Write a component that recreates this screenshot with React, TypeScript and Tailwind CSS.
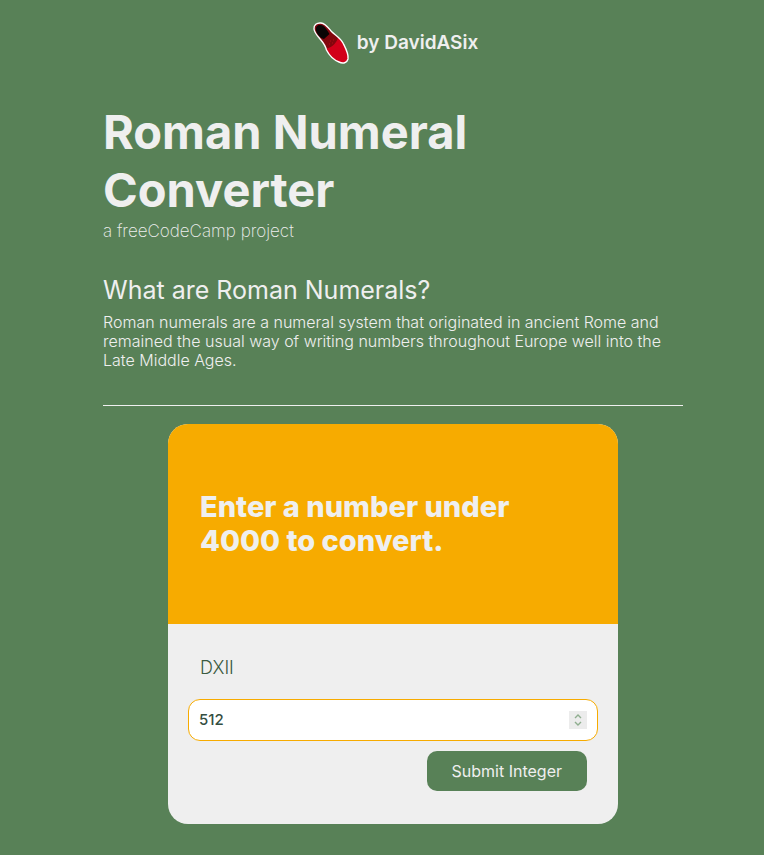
import { useState, type FormEvent } from "react";

const NUMERALS: [number, string][] = [
  [1000, "M"], [900, "CM"], [500, "D"], [400, "CD"], [100, "C"], [90, "XC"],
  [50, "L"], [40, "XL"], [10, "X"], [9, "IX"], [5, "V"], [4, "IV"], [1, "I"],
];

function toRoman(value: number): string {
  let rest = value;
  let result = "";
  for (const [size, symbol] of NUMERALS) {
    while (rest >= size) {
      result += symbol;
      rest -= size;
    }
  }
  return result;
}

function ShoeLogo() {
  return (
    <svg width="38" height="44" viewBox="0 0 38 44" aria-hidden="true">
      <path
        d="M2 8C1.500 4 5 1.500 9 2C13.500 2.500 16.500 7 19.500 10.500C23 14 28 16.500 31 22C33.500 27 37 33 36 38C35 42 31 43 27 41C22 39 17 34 14.500 29C13.500 25 11.500 22 8.500 18.500C5.500 15 2.500 12 2 8Z"
        fill="#d2001a"
      />
      <path
        d="M2 8C1.500 4 5 1.500 9 2C13.500 2.500 16.500 7 19.500 10.500C21.500 12.500 24 14.500 26 16.500C25 21 21 26 14 28C13 25 11.500 22 8.500 18.500C5.500 15 2.500 12 2 8Z"
        fill="#82060d"
      />
      <path d="M4 9C3.500 5.500 6 3.500 9 4C13 5 15 9 17.500 13L12 18C8 17 4.500 13 4 9Z" fill="#0a0505" />
      <path d="M18 20h1M21 19h1M20 22h1M17 23h1" stroke="#b00d16" strokeWidth="1" />
      <path
        d="M2 8C1.500 4 5 1.500 9 2C13.500 2.500 16.500 7 19.500 10.500C23 14 28 16.500 31 22C33.500 27 37 33 36 38C35 42 31 43 27 41C22 39 17 34 14.500 29C13.500 25 11.500 22 8.500 18.500C5.500 15 2.500 12 2 8Z"
        fill="none"
        stroke="#fff"
        strokeWidth="1.400"
      />
    </svg>
  );
}

function Chevron({ d }: { d: string }) {
  return (
    <svg width="8" height="5" viewBox="0 0 8 5" fill="none" stroke="#8fae8f" strokeWidth="1.400" aria-hidden="true">
      <path d={d} />
    </svg>
  );
}

export default function App() {
  const [value, setValue] = useState("512");
  const [roman, setRoman] = useState("DXII");

  const step = (by: number) =>
    setValue((v) => String(Math.min(3999, Math.max(1, Number(v) + by))));

  const submit = (event: FormEvent) => {
    event.preventDefault();
    const n = Number(value);
    if (n > 0 && n < 4000) setRoman(toRoman(n));
  };

  return (
    <div className="min-h-screen bg-[#588157] pr-[60px] pb-[31px] pl-[82px] font-['Inter','Liberation_Sans',sans-serif] text-[#efefef]">
      <div className="mx-auto max-w-[580px]">
        <header className="flex justify-center pt-[21px] pl-1">
          <a href="#" className="flex items-center gap-[7px] text-[19px] font-semibold">
            <ShoeLogo />
            by DavidASix
          </a>
        </header>

        <main>
          <h1 className="mt-[38px] text-[47px] leading-[58px] font-bold">Roman Numeral Converter</h1>
          <p className="text-[17px] leading-6 font-extralight">a freeCodeCamp project</p>

          <h2 className="mt-8 text-[25px] leading-[30px] font-normal">What are Roman Numerals?</h2>
          <p className="mt-2 text-base leading-[19px] font-light">
            Roman numerals are a numeral system that originated in ancient Rome and remained the
            usual way of writing numbers throughout Europe well into the Late Middle Ages.
          </p>

          <hr className="mt-[35px] border-t border-[#efefef]" />

          <form
            onSubmit={submit}
            className="mx-auto mt-[18px] max-w-[450px] overflow-hidden rounded-[20px] bg-[#efefef] text-[#344e41]"
          >
            <label
              htmlFor="number"
              className="flex min-h-[200px] items-center bg-[#f7ab00] px-8 text-[29px] leading-[34px] font-extrabold text-[#efefef]"
            >
              Enter a number under 4000 to convert.
            </label>
            <div className="px-5 pt-8 pb-[33px]">
              <output htmlFor="number" className="block px-3 text-lg leading-6 font-light text-[#3a5a40]">
                {roman}
              </output>
              <div className="mt-[19px] flex h-[42px] items-center rounded-xl border border-[#f7ab00] bg-white px-[10px]">
                <input
                  id="number"
                  type="number"
                  min={1}
                  max={3999}
                  value={value}
                  onChange={(event) => setValue(event.target.value)}
                  className="min-w-0 flex-1 text-[15px] font-medium text-[#344e41] outline-none [appearance:textfield]"
                />
                <div className="flex h-[18px] w-[18px] flex-col items-center justify-between bg-[#ececec] py-[3px]">
                  <button type="button" aria-label="Increase" className="flex" onClick={() => step(1)}>
                    <Chevron d="M1 4l3-3 3 3" />
                  </button>
                  <button type="button" aria-label="Decrease" className="flex" onClick={() => step(-1)}>
                    <Chevron d="M1 1l3 3 3-3" />
                  </button>
                </div>
              </div>
              <div className="mt-[10px] flex justify-end px-[11px]">
                <button
                  type="submit"
                  className="h-10 rounded-[10px] bg-[#588157] px-[25px] text-base text-[#efefef]"
                >
                  Submit Integer
                </button>
              </div>
            </div>
          </form>
        </main>
      </div>
    </div>
  );
}
